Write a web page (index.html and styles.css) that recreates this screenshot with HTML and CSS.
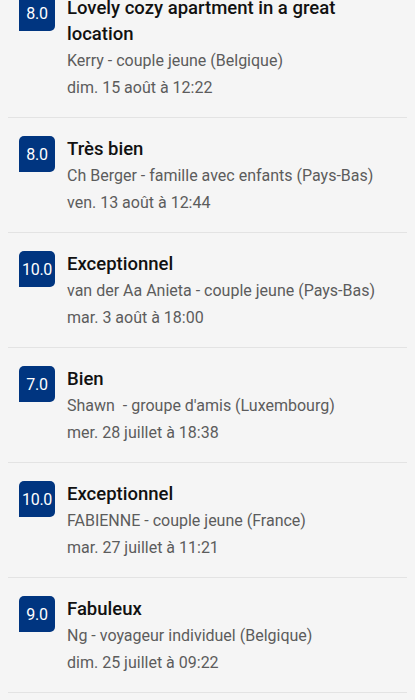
FILE: index.html
```html
<!DOCTYPE html>
<html lang="fr">
<head>
<meta charset="UTF-8">
<meta name="viewport" content="width=device-width, initial-scale=1.0">
<title>Commentaires</title>
<link rel="stylesheet" href="styles.css">
</head>
<body>
<ul class="reviews">
  <li class="review">
    <div class="score">8.0</div>
    <div class="review-body">
      <div class="review-title">Lovely cozy apartment in a great location</div>
      <div class="review-meta">Kerry - couple jeune (Belgique)</div>
      <div class="review-meta">dim. 15 août à 12:22</div>
    </div>
  </li>
  <li class="review">
    <div class="score">8.0</div>
    <div class="review-body">
      <div class="review-title">Très bien</div>
      <div class="review-meta">Ch Berger - famille avec enfants (Pays-Bas)</div>
      <div class="review-meta">ven. 13 août à 12:44</div>
    </div>
  </li>
  <li class="review">
    <div class="score">10.0</div>
    <div class="review-body">
      <div class="review-title">Exceptionnel</div>
      <div class="review-meta">van der Aa Anieta - couple jeune (Pays-Bas)</div>
      <div class="review-meta">mar. 3 août à 18:00</div>
    </div>
  </li>
  <li class="review">
    <div class="score">7.0</div>
    <div class="review-body">
      <div class="review-title">Bien</div>
      <div class="review-meta">Shawn&nbsp; - groupe d'amis (Luxembourg)</div>
      <div class="review-meta">mer. 28 juillet à 18:38</div>
    </div>
  </li>
  <li class="review">
    <div class="score">10.0</div>
    <div class="review-body">
      <div class="review-title">Exceptionnel</div>
      <div class="review-meta">FABIENNE - couple jeune (France)</div>
      <div class="review-meta">mar. 27 juillet à 11:21</div>
    </div>
  </li>
  <li class="review">
    <div class="score">9.0</div>
    <div class="review-body">
      <div class="review-title">Fabuleux</div>
      <div class="review-meta">Ng - voyageur individuel (Belgique)</div>
      <div class="review-meta">dim. 25 juillet à 09:22</div>
    </div>
  </li>
</ul>
</body>
</html>
```

FILE: styles.css
```css
body {
  font-family: Roboto, 'Liberation Sans', sans-serif;
  background-color: #f5f5f5;
  margin: 0;
  padding: 0;
  color: #1a1a1a;
  overflow: hidden;
}
.reviews {
  list-style: none;
  margin: -23px 8px 0;
  padding: 0;
}
.review {
  display: flex;
  align-items: flex-start;
  gap: 12px;
  padding: 18px 10px 16px 11px;
  border-bottom: 1px solid #e3e3e3;
}
.score {
  flex: 0 0 36px;
  width: 36px;
  height: 36px;
  display: flex;
  align-items: center;
  justify-content: center;
  background-color: #003580;
  color: #fff;
  font-size: 16px;
  letter-spacing: -0.3px;
  border-radius: 5px 5px 5px 0;
}
.review-body {
  flex: 1;
  min-width: 0;
}
.review-title {
  font-size: 18.5px;
  font-weight: 500;
  line-height: 26px;
  color: #111;
}
.review-meta {
  font-size: 16px;
  line-height: 27px;
  color: #5c5c5c;
}
```
